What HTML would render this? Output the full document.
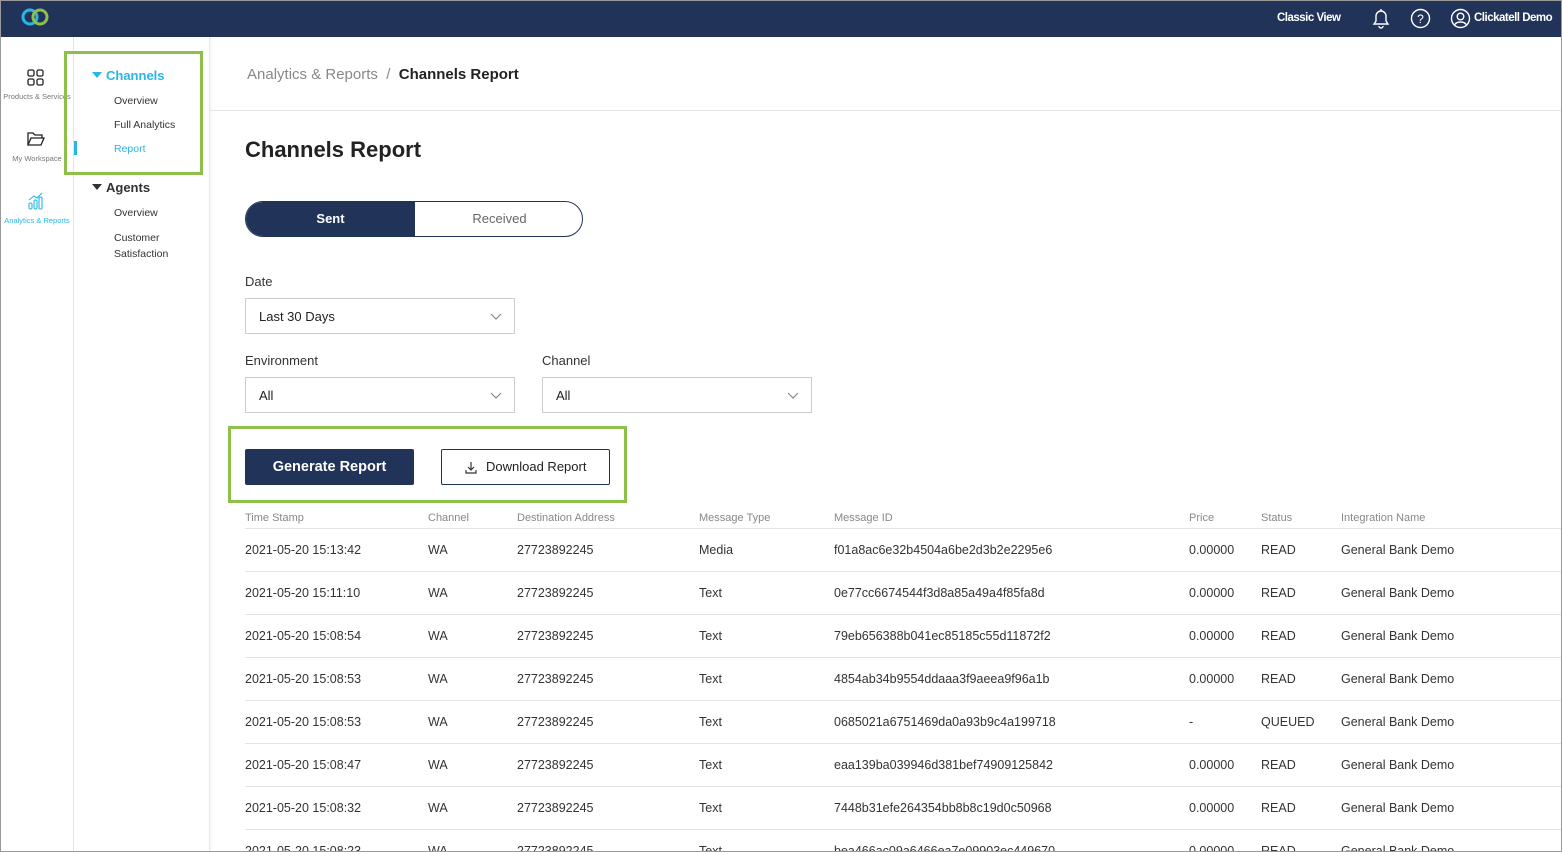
<!DOCTYPE html>
<html><head><style>
*{box-sizing:border-box;margin:0;padding:0}
html,body{width:1562px;height:852px;overflow:hidden}
body{font-family:"Liberation Sans",sans-serif;background:#fff;position:relative;color:#222}
.frame{position:absolute;left:0;top:0;width:1562px;height:852px;border:1px solid #9a9a9a;pointer-events:none;z-index:9}
.hdr{position:absolute;left:0;top:0;width:1562px;height:37px;background:#213358}
.hdr .t{position:absolute;color:#fff;font-size:11.5px;font-weight:bold;top:12px;letter-spacing:-0.5px}
.rail{position:absolute;left:0;top:37px;width:74px;height:815px;border-right:1px solid #e6e6e6;background:#fff}
.rail .l{position:absolute;width:74px;text-align:center;font-size:7.5px;color:#777;white-space:nowrap}
.sub{position:absolute;left:74px;top:37px;width:136px;height:815px;border-right:1px solid #e8e8e8;box-shadow:1px 0 3px rgba(0,0,0,.06)}
.sub div{position:absolute;font-size:10.5px;color:#333}
.green{position:absolute;border:3px solid #8cc04b}
.bc{position:absolute;left:210px;top:37px;right:0;height:74px;border-bottom:1px solid #e6e6e6}
.lab{position:absolute;font-size:13px;color:#333}
.sel{position:absolute;height:36px;border:1px solid #ccc;font-size:13px;padding:10px 13px;color:#222}
.sel svg{position:absolute;right:12px;top:14px}
.th{position:absolute;top:512px;font-size:11px;color:#888}
.row{position:absolute;left:245px;right:0;height:43px;border-top:1px solid #e3e3e3;font-size:12.5px;color:#333;overflow:hidden}
.row span{position:absolute;top:14px;white-space:nowrap}
</style></head><body>
<div class="hdr">
<svg style="position:absolute;left:20px;top:7px" width="30" height="20" viewBox="0 0 30 20"><circle cx="10" cy="10" r="7" fill="none" stroke="#29b6e6" stroke-width="3"/><circle cx="20" cy="10" r="7" fill="none" stroke="#8cc04b" stroke-width="3"/></svg>
<span class="t" style="left:1277px">Classic View</span>
<svg style="position:absolute;left:1371px;top:7px" width="20" height="22" viewBox="0 0 20 22"><path d="M3 17h14l-2-3V9a5 5 0 0 0-10 0v5z M8 19a2 2 0 0 0 4 0 M10 2v2" fill="none" stroke="#fff" stroke-width="1.4"/></svg>
<svg style="position:absolute;left:1410px;top:8px" width="21" height="21" viewBox="0 0 21 21"><circle cx="10.5" cy="10.5" r="9" fill="none" stroke="#fff" stroke-width="1.4"/><text x="10.5" y="15" text-anchor="middle" fill="#fff" font-size="12" font-family="Liberation Sans">?</text></svg>
<svg style="position:absolute;left:1450px;top:8px" width="21" height="21" viewBox="0 0 21 21"><circle cx="10.5" cy="10.5" r="9" fill="none" stroke="#fff" stroke-width="1.4"/><circle cx="10.5" cy="8.5" r="3.3" fill="none" stroke="#fff" stroke-width="1.4"/><path d="M4.5 17c2-4 10-4 12 0" fill="none" stroke="#fff" stroke-width="1.4"/></svg>
<span class="t" style="left:1474px">Clickatell Demo</span>
</div>
<div class="rail">
<svg style="position:absolute;left:27px;top:32px" width="18" height="17" viewBox="0 0 18 17"><g fill="none" stroke="#222" stroke-width="1.3"><rect x="1" y="1" width="6" height="6" rx="1.5"/><rect x="10" y="1" width="6" height="6" rx="1.5"/><rect x="1" y="10" width="6" height="6" rx="1.5"/><rect x="10" y="10" width="6" height="6" rx="1.5"/></g></svg>
<div class="l" style="top:55px">Products &amp; Services</div>
<svg style="position:absolute;left:26px;top:93px" width="19" height="17" viewBox="0 0 19 17"><path d="M2 15V3h5l2 2h7v3 M2 15l3-7h13l-3 7z" fill="none" stroke="#222" stroke-width="1.3"/></svg>
<div class="l" style="top:117px">My Workspace</div>
<svg style="position:absolute;left:27px;top:155px" width="18" height="18" viewBox="0 0 18 18"><g fill="none" stroke="#29b6e6" stroke-width="1.1"><rect x="2" y="11" width="3" height="6" rx="1.5"/><rect x="7" y="8" width="3" height="9" rx="1.5"/><rect x="12" y="5" width="3" height="12" rx="1.5"/><path d="M2 8l5-4 3 2 5-5"/></g></svg>
<div class="l" style="top:179px;color:#29b6e6">Analytics &amp; Reports</div>
</div>
<div class="sub">
<svg style="position:absolute;left:18px;top:35px" width="10" height="6"><path d="M0 0h10L5 6z" fill="#29b6e6"/></svg>
<div style="left:32px;top:31px;font-size:13px;font-weight:bold;color:#29b6e6">Channels</div>
<div style="left:40px;top:58px">Overview</div>
<div style="left:40px;top:82px">Full Analytics</div>
<div style="left:0;top:104px;width:3px;height:14px;background:#29b6e6"></div>
<div style="left:40px;top:106px;color:#29b6e6">Report</div>
<svg style="position:absolute;left:18px;top:147px" width="10" height="6"><path d="M0 0h10L5 6z" fill="#333"/></svg>
<div style="left:32px;top:143px;font-size:13px;font-weight:bold;color:#333">Agents</div>
<div style="left:40px;top:170px">Overview</div>
<div style="left:40px;top:193px;line-height:16px">Customer<br>Satisfaction</div>
</div>
<div class="green" style="left:64px;top:51px;width:139px;height:124px"></div>
<div class="bc"><span style="position:absolute;left:37px;top:29px;font-size:15px;color:#888">Analytics &amp; Reports &nbsp;/&nbsp; <b style="color:#222">Channels Report</b></span></div>
<div style="position:absolute;left:245px;top:137px;font-size:22px;font-weight:bold;color:#222">Channels Report</div>
<div style="position:absolute;left:245px;top:201px;width:338px;height:36px;border:1px solid #213358;border-radius:18px;overflow:hidden">
<div style="position:absolute;left:0;top:0;width:169px;height:36px;background:#213358;color:#fff;font-size:13px;font-weight:bold;text-align:center;line-height:34px">Sent</div>
<div style="position:absolute;left:169px;top:0;width:169px;height:36px;color:#666;font-size:13px;text-align:center;line-height:34px">Received</div></div>
<div class="lab" style="left:245px;top:274px">Date</div>
<div class="sel" style="left:245px;top:298px;width:270px">Last 30 Days<svg width="12" height="7"><path d="M1 1l5 5 5-5" fill="none" stroke="#888" stroke-width="1.2"/></svg></div>
<div class="lab" style="left:245px;top:353px">Environment</div>
<div class="lab" style="left:542px;top:353px">Channel</div>
<div class="sel" style="left:245px;top:377px;width:270px">All<svg width="12" height="7"><path d="M1 1l5 5 5-5" fill="none" stroke="#888" stroke-width="1.2"/></svg></div>
<div class="sel" style="left:542px;top:377px;width:270px">All<svg width="12" height="7"><path d="M1 1l5 5 5-5" fill="none" stroke="#888" stroke-width="1.2"/></svg></div>
<div class="green" style="left:228px;top:426px;width:399px;height:77px"></div>
<div style="position:absolute;left:245px;top:449px;width:169px;height:36px;background:#213358;border-radius:2px;color:#fff;font-size:14.5px;font-weight:bold;text-align:center;line-height:36px">Generate Report</div>
<div style="position:absolute;left:441px;top:449px;width:169px;height:36px;border:1px solid #213358;border-radius:2px;color:#222;font-size:13px;line-height:34px;padding-left:44px">
<svg style="position:absolute;left:23px;top:11px" width="12" height="13" viewBox="0 0 12 13"><path d="M6 1v8 M3 6l3 3 3-3 M1 9v3h10V9" fill="none" stroke="#333" stroke-width="1.2"/></svg>Download Report</div>
<div class="th" style="left:245px">Time Stamp</div><div class="th" style="left:428px">Channel</div><div class="th" style="left:517px">Destination Address</div><div class="th" style="left:699px">Message Type</div><div class="th" style="left:834px">Message ID</div><div class="th" style="left:1189px">Price</div><div class="th" style="left:1261px">Status</div><div class="th" style="left:1341px">Integration Name</div>
<div class="row" style="top:528px"><span style="left:0">2021-05-20 15:13:42</span><span style="left:183px">WA</span><span style="left:272px">27723892245</span><span style="left:454px">Media</span><span style="left:589px">f01a8ac6e32b4504a6be2d3b2e2295e6</span><span style="left:944px">0.00000</span><span style="left:1016px">READ</span><span style="left:1096px">General Bank Demo</span></div>
<div class="row" style="top:571px"><span style="left:0">2021-05-20 15:11:10</span><span style="left:183px">WA</span><span style="left:272px">27723892245</span><span style="left:454px">Text</span><span style="left:589px">0e77cc6674544f3d8a85a49a4f85fa8d</span><span style="left:944px">0.00000</span><span style="left:1016px">READ</span><span style="left:1096px">General Bank Demo</span></div>
<div class="row" style="top:614px"><span style="left:0">2021-05-20 15:08:54</span><span style="left:183px">WA</span><span style="left:272px">27723892245</span><span style="left:454px">Text</span><span style="left:589px">79eb656388b041ec85185c55d11872f2</span><span style="left:944px">0.00000</span><span style="left:1016px">READ</span><span style="left:1096px">General Bank Demo</span></div>
<div class="row" style="top:657px"><span style="left:0">2021-05-20 15:08:53</span><span style="left:183px">WA</span><span style="left:272px">27723892245</span><span style="left:454px">Text</span><span style="left:589px">4854ab34b9554ddaaa3f9aeea9f96a1b</span><span style="left:944px">0.00000</span><span style="left:1016px">READ</span><span style="left:1096px">General Bank Demo</span></div>
<div class="row" style="top:700px"><span style="left:0">2021-05-20 15:08:53</span><span style="left:183px">WA</span><span style="left:272px">27723892245</span><span style="left:454px">Text</span><span style="left:589px">0685021a6751469da0a93b9c4a199718</span><span style="left:944px">-</span><span style="left:1016px">QUEUED</span><span style="left:1096px">General Bank Demo</span></div>
<div class="row" style="top:743px"><span style="left:0">2021-05-20 15:08:47</span><span style="left:183px">WA</span><span style="left:272px">27723892245</span><span style="left:454px">Text</span><span style="left:589px">eaa139ba039946d381bef74909125842</span><span style="left:944px">0.00000</span><span style="left:1016px">READ</span><span style="left:1096px">General Bank Demo</span></div>
<div class="row" style="top:786px"><span style="left:0">2021-05-20 15:08:32</span><span style="left:183px">WA</span><span style="left:272px">27723892245</span><span style="left:454px">Text</span><span style="left:589px">7448b31efe264354bb8b8c19d0c50968</span><span style="left:944px">0.00000</span><span style="left:1016px">READ</span><span style="left:1096px">General Bank Demo</span></div>
<div class="row" style="top:829px;height:23px"><span style="left:0">2021-05-20 15:08:23</span><span style="left:183px">WA</span><span style="left:272px">27723892245</span><span style="left:454px">Text</span><span style="left:589px">bea466ac09a6466ea7e09903ec449670</span><span style="left:944px">0.00000</span><span style="left:1016px">READ</span><span style="left:1096px">General Bank Demo</span></div>
<div class="frame"></div>
</body></html>
